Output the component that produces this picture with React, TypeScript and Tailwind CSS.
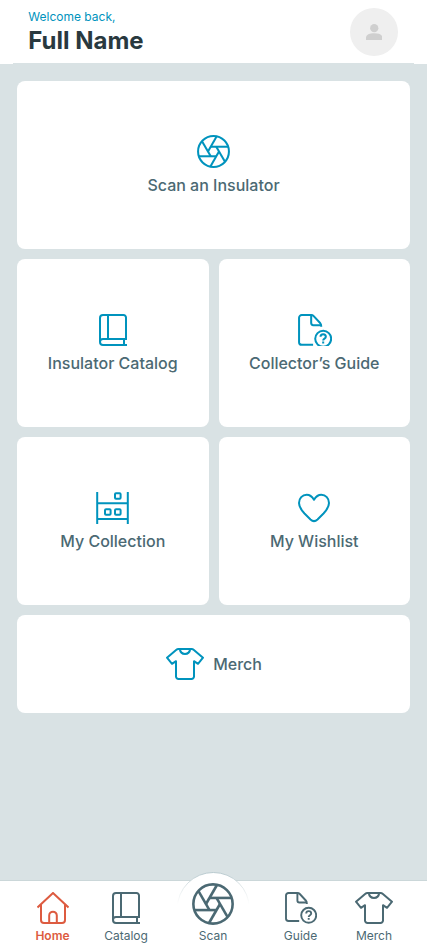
import type { ReactNode } from "react"

type IconProps = {
    className?: string;
}

type CardProps = {
    label: string;
    icon: ReactNode;
    className?: string;
}

type NavProps = {
    label: string;
    icon: ReactNode;
    className?: string;
    active?: boolean;
}

const blades = [0, 60, 120, 180, 240, 300]

const ApertureIcon = ({ className }: IconProps) => (
    <svg viewBox="-16.25 -16.25 32.5 32.5" className={className} fill="none" stroke="currentColor" strokeWidth="2">
        <circle r="15.2" />
        {blades.map((angle) => (
            <path key={angle} d="M-2.7 -4.7H14.5" transform={`rotate(${angle})`} />
        ))}
    </svg>
)

const BookIcon = ({ className }: IconProps) => (
    <svg viewBox="0 0 28 32" className={className} fill="none" stroke="currentColor" strokeWidth="2">
        <path d="M1 28V4a3 3 0 0 1 3-3h20.5A2.5 2.5 0 0 1 27 3.5V25H4a3 3 0 0 0 0 6h24" />
        <path d="M9 1v24M25 25v6" />
    </svg>
)

// the viewBox is passed in because the card version cuts the badge at the bottom
const GuideIcon = ({ className, viewBox = "0 0 32 32" }: IconProps & { viewBox?: string }) => (
    <svg viewBox={viewBox} className={className} fill="none" stroke="currentColor" strokeWidth="1.9" strokeLinejoin="round">
        <path d="M14.2 29H3.5A2.5 2.5 0 0 1 1 26.5V3.5A2.5 2.5 0 0 1 3.5 1h9c1 0 1.7.4 2.3 1l6 6.5c.8.9 1.1 1.5 1.1 3.5" />
        <path d="M12.4 1v7.5a2 2 0 0 0 2 2h7" />
        <circle cx="23.7" cy="23.3" r="7.5" />
        <path d="M21.2 21.5c0-3.2 5-3.2 5 0 0 1.7-2.5 1.7-2.5 3.4M23.7 26v1.7" />
    </svg>
)

const ShelfIcon = ({ className }: IconProps) => (
    <svg viewBox="0 0 33 32" className={className} fill="none" stroke="currentColor" strokeWidth="2">
        <path d="M1.2 0v32M31.8 0v32M1 11.3h31M1 27h31" />
        <rect x="19" y="1.2" width="5.6" height="5.6" rx="1" />
        <rect x="9" y="17.2" width="5.6" height="5.6" rx="1" />
        <rect x="19" y="17.2" width="5.6" height="5.6" rx="1" />
    </svg>
)

const HeartIcon = ({ className }: IconProps) => (
    <svg viewBox="0 0 32 32" className={className} fill="none" stroke="currentColor" strokeWidth="2" strokeLinejoin="round">
        <path d="M16 7.8C14 4.5 11.5 2.8 8.700 2.800 4.300 2.800 1 6.300 1 11c0 4 2 6.800 5.500 10.500l6 6c2.500 2.300 4.500 2.300 7 0l6-6C29 17.800 31 15 31 11c0-4.700-3.300-8.200-7.700-8.200-2.800 0-5.300 1.700-7.300 5z" />
    </svg>
)

const ShirtIcon = ({ className }: IconProps) => (
    <svg viewBox="0 0 38 32" className={className} fill="none" stroke="currentColor" strokeWidth="2" strokeLinejoin="round">
        <path d="M12.5 1h13c1 0 1.7.3 2.4.9L37 9.7l-5 6.1-4-2.600v15.300a2.500 2.500 0 0 1-2.500 2.500h-13a2.500 2.500 0 0 1-2.500-2.500V13.200l-4 2.600-5-6.100 9.100-7.800c.7-.6 1.400-.9 2.400-.9z" />
        <path d="M13.8 1c.4 3 2.4 4.900 5.200 4.900s4.800-1.900 5.200-4.900" />
    </svg>
)

const HomeIcon = ({ className }: IconProps) => (
    <svg viewBox="0 0 32 32" className={className} fill="none" stroke="currentColor" strokeWidth="2">
        <path d="M.5 15.5 16 1l15.500 14.500" />
        <path d="M4 12.500V28a3 3 0 0 0 3 3h18a3 3 0 0 0 3-3V12.500" />
        <path d="M12.200 31v-7.500a3.800 3.800 0 0 1 7.600 0V31" />
    </svg>
)

const Card = ({ label, icon, className = "h-[168px] flex-col gap-[5px] pt-[3px]" }: CardProps) => (
    <button className={`flex w-full items-center justify-center rounded-lg bg-white text-[#0093bd] ${className}`}>
        {icon}
        <span className="text-base font-medium text-[#4b6973]">{label}</span>
    </button>
)

const NavItem = ({ label, icon, className = "gap-1", active = false }: NavProps) => (
    <button className={`flex w-[62px] flex-col items-center justify-end ${active ? "font-semibold text-[#dd5b40]" : "text-[#4b6973]"} ${className}`}>
        {icon}
        <span className="text-xs leading-4">{label}</span>
    </button>
)

const App = () => {
    return (
        <div className="flex h-[952px] w-[427px] flex-col overflow-hidden bg-[#d9e2e4] font-['Inter',sans-serif]">
            <header className="flex h-16 shrink-0 items-start justify-between bg-white pr-[29px] pl-[28.3px]">
                <div className="pt-2">
                    <p className="text-xs leading-[18px] text-[#0093bd]">Welcome back,</p>
                    <h1 className="text-2xl leading-[30px] font-bold text-[#29393f]">Full Name</h1>
                </div>
                <div className="mt-2 flex size-12 items-center justify-center rounded-full bg-[#efefef]">
                    <svg viewBox="0 0 16 16" className="size-[16.5px]" fill="#cfcfcf">
                        <circle cx="8" cy="4" r="4" />
                        <path d="M0 16v-2.500C0 10 3.500 8.900 8 8.900s8 1.100 8 4.600V16z" />
                    </svg>
                </div>
            </header>
            <div className="mx-[13px] -mt-px h-px shrink-0 bg-[#d9e2e4]" />

            <main className="grid grid-cols-2 gap-2.5 px-[17px] pt-[17px]">
                <div className="col-span-2">
                    <Card label="Scan an Insulator" className="h-[168px] flex-col gap-[5px] pt-0.5" icon={<ApertureIcon className="size-[33px]" />} />
                </div>
                <Card label="Insulator Catalog" icon={<BookIcon className="h-8 w-7" />} />
                <Card label="Collector’s Guide" icon={<GuideIcon viewBox="0 0 32 30.12" className="ml-0.5 h-8 w-[34px]" />} />
                <Card label="My Collection" icon={<ShelfIcon className="h-8 w-[33px]" />} />
                <Card label="My Wishlist" icon={<HeartIcon className="size-8" />} />
                <div className="col-span-2">
                    <Card label="Merch" className="h-[98px] gap-[9px] pl-px" icon={<ShirtIcon className="h-8 w-[38px]" />} />
                </div>
            </main>

            <nav className="relative mt-auto h-[72.5px] shrink-0 border-t border-[#cbd7d9] bg-white">
                {/* raised bump behind the scan button, its outline fades into the bar */}
                <svg viewBox="0 0 74 40" className="absolute -top-[9px] left-[176px] h-10 w-[74px]">
                    <defs>
                        <linearGradient id="bump" x1="0" y1="0" x2="0" y2="1">
                            <stop offset="0" stopColor="#b9cacf" />
                            <stop offset="0.45" stopColor="#dae2e4" stopOpacity="0" />
                        </linearGradient>
                    </defs>
                    <circle cx="37.3" cy="36.5" r="36" fill="#fff" stroke="url(#bump)" />
                </svg>
                <div className="relative flex h-[63.5px] items-end">
                    <NavItem active label="Home" className="ml-[21.5px] gap-1" icon={<HomeIcon className="size-8" />} />
                    <NavItem label="Catalog" className="ml-[11.5px] gap-1" icon={<BookIcon className="h-8 w-7" />} />
                    <NavItem label="Scan" className="ml-[25px] gap-[3px]" icon={<ApertureIcon className="size-[42px]" />} />
                    <NavItem label="Guide" className="ml-[25.5px] gap-1" icon={<GuideIcon className="size-8" />} />
                    <NavItem label="Merch" className="ml-[11.5px] gap-1" icon={<ShirtIcon className="h-8 w-[38px]" />} />
                </div>
            </nav>
        </div>
    )
}

export default App;
